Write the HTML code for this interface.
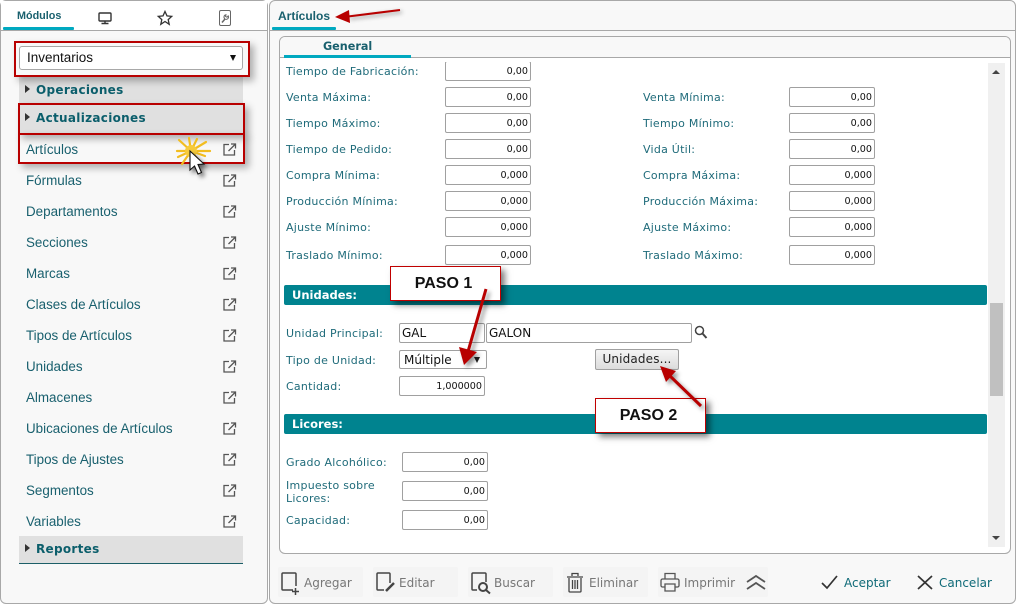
<!DOCTYPE html>
<html><head><meta charset="utf-8"><style>
html,body{margin:0;padding:0;background:#fff}
body{width:1017px;height:606px;position:relative;overflow:hidden;font-family:"Liberation Sans",sans-serif}
div,span{position:absolute;box-sizing:border-box;white-space:nowrap}
svg{position:absolute;overflow:visible}
.l{font:11px/14px "DejaVu Sans",sans-serif;color:#1f6b7a;letter-spacing:.25px;margin-top:1px}
.i{width:86px;height:20px;border:1px solid #a0a0a0;border-radius:2px;background:#fff;font:9.600px/19px "DejaVu Sans",sans-serif;color:#111;text-align:right;padding-right:2px}
.m{left:26px;font:13.400px/18px "Liberation Sans",sans-serif;color:#19606e}
.h{left:19px;width:224px;height:28px;background:#e0e0e0;border-bottom:1px solid #1c5f68}
.ht{left:36px;font:bold 12px/16px "DejaVu Sans",sans-serif;color:#0b5e6b;letter-spacing:.3px;margin-top:1px}
.tr{width:0;height:0;border-left:5px solid #333;border-top:4.500px solid transparent;border-bottom:4.500px solid transparent;left:25px}
.bar{left:284px;width:703px;height:20px;background:#00838f;border-radius:2px;color:#fff;font:bold 11.500px/20px "DejaVu Sans",sans-serif;padding-left:8px}
.red{border:2px solid #b80000;box-shadow:4px 4px 7px rgba(0,0,0,.3)}
.paso{width:111px;height:35px;background:#fff;border:1px solid #c00000;box-shadow:4px 4px 6px rgba(0,0,0,.5);font:bold 16px/33px "Liberation Sans",sans-serif;color:#111;text-align:center;padding-right:4px}
.tb{top:567px;height:30px;background:#f4f4f4;border-radius:2px}
.tt{top:576px;font:12px/15px "DejaVu Sans",sans-serif;color:#777}
.ok{top:576px;font:12px/15px "DejaVu Sans",sans-serif;color:#0f6a78}
</style></head><body>

<!-- left panel -->
<div style="left:0;top:0;width:268px;height:604px;background:#f8f8f8;border:1px solid #a8a8a8;border-radius:6px"></div>
<div style="left:1px;top:1px;width:266px;height:29px;background:#fff"></div>
<div style="left:1px;top:30px;width:266px;height:1px;background:#a8a8a8"></div>
<div style="left:3px;top:27px;width:71px;height:3px;background:#00a9c0;border-radius:1px"></div>
<div style="left:17px;top:9px;font:bold 10.800px/14px 'Liberation Sans',sans-serif;color:#19606e">Módulos</div>
<svg style="left:98px;top:12px" width="15" height="13" viewBox="0 0 15 13" fill="none" stroke="#333" stroke-width="1.400"><rect x="1" y="1" width="12" height="8" rx="1"/><path d="M3.500 11.500h7M7 9.500v2"/></svg>
<svg style="left:157px;top:10px" width="16" height="16" viewBox="0 0 16 16" fill="none" stroke="#333" stroke-width="1.300"><path d="M8 1.500l2 4.400 4.700.5-3.500 3.200 1 4.700L8 11.500l-4.200 2.800 1-4.700-3.500-3.200 4.700-.5z"/></svg>
<svg style="left:219px;top:10px" width="12" height="16" viewBox="0 0 12 16" fill="none" stroke="#666" stroke-width="1"><rect x=".5" y=".5" width="11" height="15" rx="1.500"/><path d="M3 12.500l3-3.500" stroke-width="1.500"/><path d="M6 9a2.300 2.300 0 0 1 1-4.200l-.5 1.600 1.500.8 1.200-1.300A2.300 2.300 0 0 1 6 9z" stroke-width="1"/></svg>

<div style="left:19px;top:46px;width:224px;height:24px;background:#fff;border:1px solid #a8a8a8;border-radius:3px;font:13.500px/22px 'Liberation Sans',sans-serif;color:#111;padding-left:7px">Inventarios</div>
<div style="left:230px;top:55px;width:0;height:0;border-top:6px solid #111;border-left:3.500px solid transparent;border-right:3.500px solid transparent"></div>

<div class="h" style="top:76px;height:29px;border:0"></div>
<div class="tr" style="top:85px"></div><div class="ht" style="top:81px">Operaciones</div>
<div class="h" style="top:105px;height:29px;border:0"></div>
<div class="tr" style="top:113px"></div><div class="ht" style="top:109px">Actualizaciones</div>

<div class="m" style="top:141px">Artículos</div>
<div class="m" style="top:172px">Fórmulas</div>
<div class="m" style="top:203px">Departamentos</div>
<div class="m" style="top:234px">Secciones</div>
<div class="m" style="top:265px">Marcas</div>
<div class="m" style="top:296px">Clases de Artículos</div>
<div class="m" style="top:327px">Tipos de Artículos</div>
<div class="m" style="top:358px">Unidades</div>
<div class="m" style="top:389px">Almacenes</div>
<div class="m" style="top:420px">Ubicaciones de Artículos</div>
<div class="m" style="top:451px">Tipos de Ajustes</div>
<div class="m" style="top:482px">Segmentos</div>
<div class="m" style="top:513px">Variables</div>

<svg style="left:223px;top:0" width="13" height="530" viewBox="0 0 13 530" fill="none" stroke="#555" stroke-width="1.300">
<defs><g id="e"><path d="M6 1.500H1v10.500h10.500V7M5.500 8L12 1.500M8 1h4.500v4.500"/></g></defs>
<use href="#e" y="143"/><use href="#e" y="174"/><use href="#e" y="205"/><use href="#e" y="236"/><use href="#e" y="267"/><use href="#e" y="298"/><use href="#e" y="329"/><use href="#e" y="360"/><use href="#e" y="391"/><use href="#e" y="422"/><use href="#e" y="453"/><use href="#e" y="484"/><use href="#e" y="515"/>
</svg>

<div class="h" style="top:536px;height:28px"></div>
<div class="tr" style="top:544px"></div><div class="ht" style="top:540px">Reportes</div>

<!-- red highlights -->
<div class="red" style="left:14px;top:41px;width:236px;height:36px"></div>
<div class="red" style="left:18px;top:103px;width:227px;height:32px"></div>
<div class="red" style="left:18px;top:133px;width:227px;height:31px"></div>

<!-- star + cursor -->
<svg style="left:176px;top:137px" width="36" height="42" viewBox="0 0 36 42">
<g stroke="#f2bd20" stroke-width="2.200" stroke-linecap="round">
<path d="M15 14L3 3M15 14L13 1M15 14L21 2M15 14L30 5M15 14L34 14M15 14L29 19M15 14L24 25M15 14L6 27M15 14L2 20M15 14L1 14"/></g>
<circle cx="15" cy="14" r="6" fill="#f6cb3c"/>
<path d="M14 14v19l4.500-4 3.500 8 3.500-1.500-3.500-8 6-.5z" fill="#fff" stroke="#111" stroke-width="1.100" style="filter:drop-shadow(3px 3px 2px rgba(0,0,0,.5))"/>
</svg>

<!-- right panel -->
<div style="left:269px;top:0;width:747px;height:604px;background:#f8f8f8;border:1px solid #a8a8a8;border-radius:6px"></div>
<div style="left:270px;top:30px;width:745px;height:1px;background:#a8a8a8"></div>
<div style="left:272px;top:27px;width:64px;height:3px;background:#00a9c0;border-radius:1px"></div>
<div style="left:278px;top:9px;font:bold 12px/15px 'Liberation Sans',sans-serif;color:#19606e">Artículos</div>
<svg style="left:334px;top:8px" width="70" height="18" viewBox="0 0 70 18"><path d="M66 2L14 8.500" stroke="#b80000" stroke-width="2" style="filter:drop-shadow(2px 2px 2px rgba(0,0,0,.4))"/><path d="M1 9l14-7 1 13z" fill="#b80000"/></svg>

<!-- inner -->
<div style="left:279px;top:36px;width:732px;height:518px;background:#fff;border:1px solid #a8a8a8;border-radius:6px"></div>
<div style="left:280px;top:37px;width:730px;height:21px;background:#f8f8f8;border-radius:5px 5px 0 0;border-bottom:1px solid #a8a8a8"></div>
<div style="left:284px;top:55px;width:127px;height:3px;background:#00a9c0"></div>
<div style="left:323px;top:39px;font:bold 11.200px/15px 'DejaVu Sans',sans-serif;color:#19606e">General</div>

<!-- scrollbar -->
<div style="left:988px;top:63px;width:17px;height:484px;background:#f0f0f0"></div>
<div style="left:990px;top:303px;width:13px;height:93px;background:#c0c0c0"></div>
<div style="left:992px;top:70px;width:0;height:0;border-bottom:4px solid #444;border-left:4px solid transparent;border-right:4px solid transparent"></div>
<div style="left:992px;top:536px;width:0;height:0;border-top:4px solid #444;border-left:4px solid transparent;border-right:4px solid transparent"></div>

<!-- form -->
<div class="l" style="left:286px;top:64px">Tiempo de Fabricación:</div>
<div class="i" style="left:445px;top:61px">0,00</div>
<div style="left:440px;top:58px;width:96px;height:4px;background:#fff"></div>

<div class="l" style="left:286px;top:90px">Venta Máxima:</div><div class="i" style="left:445px;top:87px">0,00</div>
<div class="l" style="left:643px;top:90px">Venta Mínima:</div><div class="i" style="left:789px;top:87px">0,00</div>
<div class="l" style="left:286px;top:116px">Tiempo Máximo:</div><div class="i" style="left:445px;top:113px">0,00</div>
<div class="l" style="left:643px;top:116px">Tiempo Mínimo:</div><div class="i" style="left:789px;top:113px">0,00</div>
<div class="l" style="left:286px;top:142px">Tiempo de Pedido:</div><div class="i" style="left:445px;top:139px">0,00</div>
<div class="l" style="left:643px;top:142px">Vida Útil:</div><div class="i" style="left:789px;top:139px">0,00</div>
<div class="l" style="left:286px;top:168px">Compra Mínima:</div><div class="i" style="left:445px;top:165px">0,000</div>
<div class="l" style="left:643px;top:168px">Compra Máxima:</div><div class="i" style="left:789px;top:165px">0,000</div>
<div class="l" style="left:286px;top:194px">Producción Mínima:</div><div class="i" style="left:445px;top:191px">0,000</div>
<div class="l" style="left:643px;top:194px">Producción Máxima:</div><div class="i" style="left:789px;top:191px">0,000</div>
<div class="l" style="left:286px;top:220px">Ajuste Mínimo:</div><div class="i" style="left:445px;top:217px">0,000</div>
<div class="l" style="left:643px;top:220px">Ajuste Máximo:</div><div class="i" style="left:789px;top:217px">0,000</div>
<div class="l" style="left:286px;top:248px">Traslado Mínimo:</div><div class="i" style="left:445px;top:245px">0,000</div>
<div class="l" style="left:643px;top:248px">Traslado Máximo:</div><div class="i" style="left:789px;top:245px">0,000</div>

<div class="bar" style="top:285px">Unidades:</div>

<div class="l" style="left:286px;top:326px">Unidad Principal:</div>
<div class="i" style="left:399px;top:323px;text-align:left;padding-left:2px;font:12px/19px 'DejaVu Sans',sans-serif">GAL</div>
<div class="i" style="left:486px;top:323px;width:206px;text-align:left;padding-left:2px;font:12px/19px 'DejaVu Sans',sans-serif">GALON</div>
<svg style="left:694px;top:325px" width="14" height="15" viewBox="0 0 14 15" fill="none" stroke="#444" stroke-width="1.500"><circle cx="5.500" cy="5.500" r="4"/><path d="M8.500 8.500l4 4.500" stroke-width="2"/></svg>

<div class="l" style="left:286px;top:353px">Tipo de Unidad:</div>
<div class="i" style="left:399px;top:350px;width:88px;height:19px;text-align:left;padding-left:4px;font:12px/18px 'DejaVu Sans',sans-serif">Múltiple</div>
<div style="left:474px;top:357px;width:0;height:0;border-top:6px solid #222;border-left:3.500px solid transparent;border-right:3.500px solid transparent"></div>
<div style="left:595px;top:349px;width:84px;height:21px;background:linear-gradient(#f5f5f5,#dcdcdc);border:1px solid #a0a0a0;border-radius:2px;font:12px/19px 'DejaVu Sans',sans-serif;color:#222;text-align:center;letter-spacing:.15px">Unidades...</div>

<div class="l" style="left:286px;top:379px">Cantidad:</div>
<div class="i" style="left:399px;top:376px">1,000000</div>

<div class="bar" style="top:414px">Licores:</div>

<div class="l" style="left:286px;top:455px">Grado Alcohólico:</div><div class="i" style="left:402px;top:452px">0,00</div>
<div class="l" style="left:286px;top:478px;line-height:13px">Impuesto sobre<br>Licores:</div><div class="i" style="left:402px;top:481px">0,00</div>
<div class="l" style="left:286px;top:513px">Capacidad:</div><div class="i" style="left:402px;top:510px">0,00</div>

<!-- paso boxes -->
<div class="paso" style="left:390px;top:266px">PASO 1</div>
<div class="paso" style="left:595px;top:398px">PASO 2</div>
<svg style="left:0;top:0;filter:drop-shadow(3px 3px 2px rgba(0,0,0,.4))" width="1017" height="606" viewBox="0 0 1017 606">
<path d="M486 289L467 355" stroke="#b80000" stroke-width="3" fill="none"/><path d="M459 347l18 5-13 13z" fill="#b80000"/>
<path d="M701 406L669 375" stroke="#b80000" stroke-width="3" fill="none"/><path d="M660 366l16 5-10 11z" fill="#b80000"/>
</svg>

<!-- toolbar -->
<div class="tb" style="left:278px;width:85px"></div>
<div class="tb" style="left:373px;width:85px"></div>
<div class="tb" style="left:468px;width:85px"></div>
<div class="tb" style="left:563px;width:85px"></div>
<div class="tb" style="left:658px;width:110px"></div>
<svg style="left:281px;top:572px" width="20" height="24" viewBox="0 0 20 24" fill="none" stroke="#444" stroke-width="1.500"><path d="M12 18H2a1 1 0 0 1-1-1V2a1 1 0 0 1 1-1h12a1 1 0 0 1 1 1v12M14.500 16v7M11 19.500h7"/></svg>
<svg style="left:376px;top:572px" width="20" height="22" viewBox="0 0 20 22" fill="none" stroke="#444" stroke-width="1.500"><path d="M8 18H2a1 1 0 0 1-1-1V2a1 1 0 0 1 1-1h11a1 1 0 0 1 1 1v9"/><path d="M10 19l8-8" stroke-width="2.500"/></svg>
<svg style="left:471px;top:572px" width="20" height="22" viewBox="0 0 20 22" fill="none" stroke="#444" stroke-width="1.500"><path d="M6 18H2a1 1 0 0 1-1-1V2a1 1 0 0 1 1-1h12a1 1 0 0 1 1 1v8"/><circle cx="12" cy="15" r="4" stroke-width="2"/><path d="M15 18l4 3.500" stroke-width="2"/></svg>
<svg style="left:566px;top:572px" width="18" height="21" viewBox="0 0 18 21" fill="none" stroke="#444" stroke-width="1.300"><path d="M1 5h16M6 4V1.500h6V4M3 6v13a1 1 0 0 0 1 1h10a1 1 0 0 0 1-1V6M6.500 8v9M9 8v9M11.500 8v9"/></svg>
<svg style="left:660px;top:572px" width="20" height="20" viewBox="0 0 20 20" fill="none" stroke="#555" stroke-width="1.300"><path d="M5 7V1.500h10V7M5 15H2.500A1.500 1.500 0 0 1 1 13.500v-5A1.500 1.500 0 0 1 2.500 7h15A1.500 1.500 0 0 1 19 8.500v5a1.500 1.500 0 0 1-1.500 1.500H15M5 12h10v7H5z"/></svg>
<div class="tt" style="left:304px">Agregar</div>
<div class="tt" style="left:399px">Editar</div>
<div class="tt" style="left:494px">Buscar</div>
<div class="tt" style="left:589px">Eliminar</div>
<div class="tt" style="left:684px">Imprimir</div>
<svg style="left:746px;top:574px" width="20" height="17" viewBox="0 0 20 17" fill="none" stroke="#555" stroke-width="1.800"><path d="M1 8l9-6 9 6M1 15l9-6 9 6"/></svg>

<svg style="left:821px;top:575px" width="17" height="14" viewBox="0 0 17 14" fill="none" stroke="#333" stroke-width="1.700"><path d="M1 8l5 5L16 1"/></svg>
<div class="ok" style="left:844px">Aceptar</div>
<svg style="left:917px;top:575px" width="16" height="15" viewBox="0 0 16 15" fill="none" stroke="#333" stroke-width="1.700"><path d="M1 1l14 13M15 1L1 14"/></svg>
<div class="ok" style="left:939px">Cancelar</div>

</body></html>
